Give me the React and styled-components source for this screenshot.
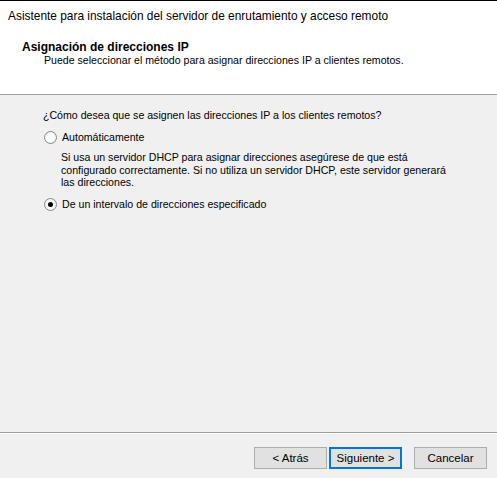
import styled, { createGlobalStyle } from "styled-components";

const GlobalStyle = createGlobalStyle`
  body {
    margin: 0;
    background: #f0f0f0;
    font-family: "Liberation Sans", Arial, sans-serif;
    font-size: 10.6px;
    color: #000;
  }
`;

const Window = styled.div`
  width: 497px;
  height: 478px;
  display: flex;
  flex-direction: column;
  border-top: 1px solid #000;
  box-sizing: border-box;
  background: #f0f0f0;
`;

const Header = styled.div`
  height: 94px;
  box-sizing: border-box;
  background: #fff;
  border-bottom: 1px solid #a0a0a0;
  padding: 8px 0 0 8px;
`;

const WindowTitle = styled.div`
  font-size: 11.9px;
  line-height: 15px;
`;

const Heading = styled.div`
  margin: 17px 0 0 14px;
  font-weight: bold;
  font-size: 12px;
  line-height: 13px;
`;

const Subheading = styled.div`
  margin: 0 0 0 36px;
  line-height: 13px;
`;

const Content = styled.div`
  flex: 1;
  padding: 14px 0 0 43px;
`;

const Question = styled.div`
  line-height: 13px;
`;

const Option = styled.label`
  display: flex;
  align-items: center;
  gap: 5px;
  margin: ${(p) => p.$top}px 0 0 1px;
  line-height: 13px;
`;

const Radio = styled.span`
  width: 11px;
  height: 11px;
  border-radius: 50%;
  border: 1px solid #8a8a8a;
  background: radial-gradient(circle at 50% 50%, #ffffff 40%, #e6e6e6 100%);
  display: flex;
  align-items: center;
  justify-content: center;
  flex: none;
  &::after {
    content: "";
    width: 5px;
    height: 5px;
    border-radius: 50%;
    background: ${(p) => (p.$checked ? "#000" : "transparent")};
  }
`;

const Description = styled.div`
  margin: 7px 0 0 18px;
  width: 400px;
  line-height: 12.5px;
`;

const Footer = styled.div`
  height: 46px;
  box-sizing: border-box;
  border-top: 1px solid #a0a0a0;
  box-shadow: inset 0 1px 0 #fff;
  display: flex;
  justify-content: flex-end;
  align-items: flex-start;
  padding: 14px 10px 0 0;
`;

const Button = styled.button`
  width: 73px;
  height: 22px;
  box-sizing: border-box;
  margin-left: ${(p) => p.$gap}px;
  background: #e1e1e1;
  border: ${(p) => (p.$focused ? "2px solid #0078d7" : "1px solid #adadad")};
  font-family: "Liberation Sans", Arial, sans-serif;
  font-size: 11.5px;
  color: #000;
  padding: 0;
`;

export default function App() {
  return (
    <>
      <GlobalStyle />
      <Window>
        <Header>
          <WindowTitle>
            Asistente para instalación del servidor de enrutamiento y acceso remoto
          </WindowTitle>
          <Heading>Asignación de direcciones IP</Heading>
          <Subheading>
            Puede seleccionar el método para asignar direcciones IP a clientes remotos.
          </Subheading>
        </Header>
        <Content>
          <Question>
            ¿Cómo desea que se asignen las direcciones IP a los clientes remotos?
          </Question>
          <Option $top={9}>
            <Radio />
            Automáticamente
          </Option>
          <Description>
            Si usa un servidor DHCP para asignar direcciones asegúrese de que está
            configurado correctamente. Si no utiliza un servidor DHCP, este servidor
            generará las direcciones.
          </Description>
          <Option $top={9}>
            <Radio $checked />
            De un intervalo de direcciones especificado
          </Option>
        </Content>
        <Footer>
          <Button $gap={0}>&lt; Atrás</Button>
          <Button $gap={2} $focused>
            Siguiente &gt;
          </Button>
          <Button $gap={12}>Cancelar</Button>
        </Footer>
      </Window>
    </>
  );
}
